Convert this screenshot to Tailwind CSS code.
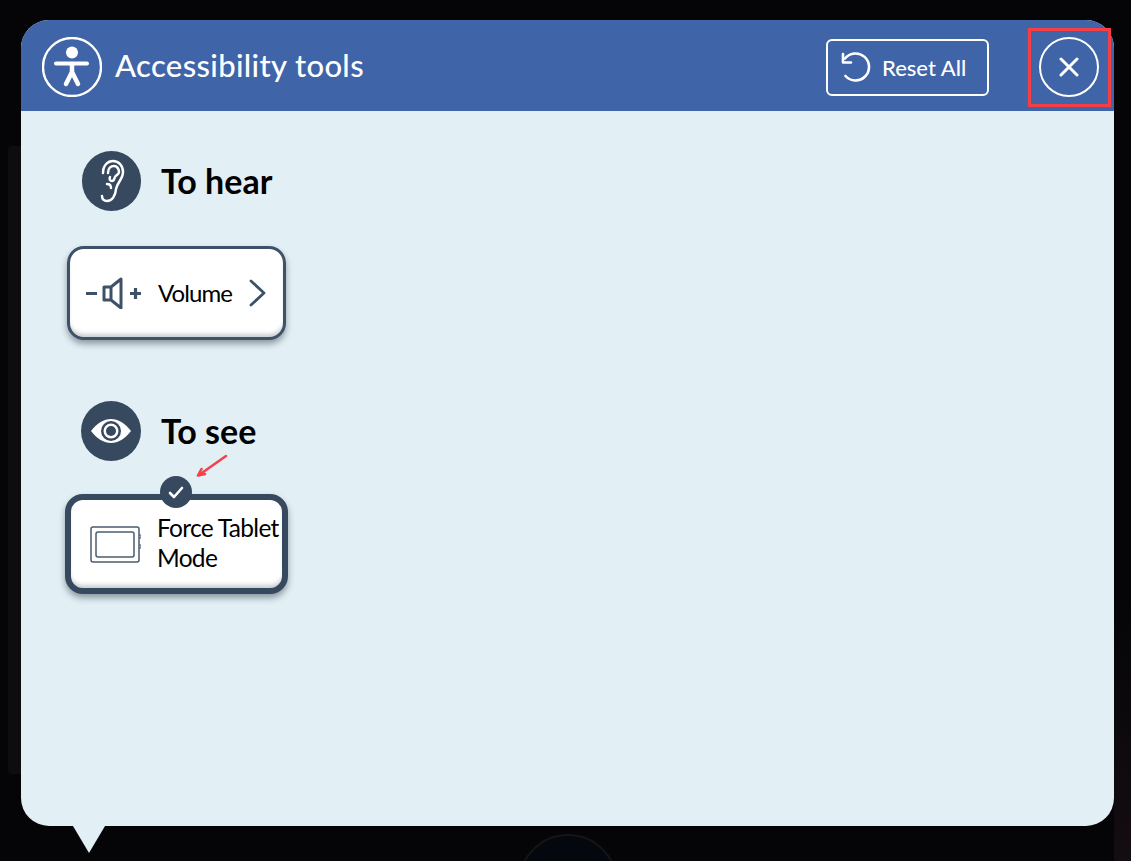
<!DOCTYPE html>
<html lang="en">
<head>
  <meta charset="UTF-8" />
  <title>Accessibility tools</title>
  <script src="https://cdn.jsdelivr.net/npm/@tailwindcss/browser@4"></script>
</head>
<body class="bg-[#050507] h-[861px] w-[1131px] overflow-hidden relative font-['Lato',sans-serif]">

  <!-- dim page behind the dialog -->
  <div class="absolute left-[8px] top-[146px] w-[1044px] h-[628px] bg-[#0d0d0f] rounded"></div>
  <div class="absolute left-[518px] top-[834px] w-[100px] h-[27px] overflow-hidden">
    <div class="w-[100px] h-[100px] rounded-full border-2 border-[#151518] bg-[#05070f]"></div>
  </div>
  <div class="absolute left-[1114px] top-[600px] w-[17px] h-[261px] bg-linear-to-b from-transparent to-[#140d11]"></div>

  <!-- dialog -->
  <div class="relative ml-[21px] pt-[20px] w-[1093px]">
    <div class="h-[806px] rounded-[28px] bg-[#e2eff5] flex flex-col overflow-hidden">

      <!-- header -->
      <div class="h-[91px] shrink-0 bg-[#4064a8] flex items-center pl-[21px] pr-[15px] pt-[3px] text-white">
        <svg width="60" height="60" viewBox="0 0 60 60" fill="none" stroke="white" class="shrink-0">
          <circle cx="30" cy="30" r="29" stroke-width="2.400"/>
          <circle cx="30" cy="15.500" r="6" fill="white" stroke="none"/>
          <path d="M14 26.500H45" stroke-width="4" stroke-linecap="round"/>
          <path d="M30 27V35L24 47M30 35L36 47" stroke-width="4.500" stroke-linecap="round" stroke-linejoin="round"/>
        </svg>
        <div class="ml-[13px] -mt-[4px] text-[31px] font-medium tracking-[0.35px] leading-none">Accessibility tools</div>
        <button class="ml-auto w-[163px] h-[57px] rounded-[6px] border-[2.500px] border-white flex items-center pl-[12px] text-[22px] font-medium">
          <svg width="31" height="31" viewBox="0 0 31 31" fill="none" stroke="white" stroke-width="2.600" stroke-linecap="round" stroke-linejoin="round" class="shrink-0">
            <path d="M5 6.500A13.500 13.500 0 1 1 5.500 24"/>
            <path d="M3 2V10.500H11"/>
          </svg>
          <span class="ml-[11px]">Reset All</span>
        </button>
        <button class="ml-[50px] w-[60px] h-[60px] rounded-full border-[2.500px] border-white flex items-center justify-center shrink-0">
          <svg width="20" height="20" viewBox="0 0 20 20" fill="none" stroke="white" stroke-width="3" stroke-linecap="round">
            <path d="M2 2L18 18M18 2L2 18"/>
          </svg>
        </button>
      </div>

      <!-- body -->
      <div class="flex flex-col items-start">
        <div class="ml-[61px] mt-[40px] flex items-center">
          <div class="w-[59px] h-[60px] rounded-full bg-[#37495f] flex items-center justify-center">
            <svg width="26" height="44" viewBox="0 0 26 44" fill="none" stroke="white" stroke-width="2.500" stroke-linecap="round" stroke-linejoin="round">
              <path d="M4 14C4 6 9 2 14 2C20 2 24 7 24 13C24 20 18 24 17 30C16.500 37 13 42 8 42C5 42 3 40 3 37"/>
              <path d="M9 14C9 9 12 7 15 7C18 7 20 10 20 13C20 15.500 17 16 16 18C15 20 15 22 13 22C11 22 10 20 11 18"/>
              <path d="M8 25C10 25 12 26 12 29"/>
            </svg>
          </div>
          <h2 class="ml-[20px] text-[34px] font-bold text-black leading-none tracking-[0px]">To hear</h2>
        </div>

        <button class="ml-[46px] mt-[35px] w-[219px] h-[94px] rounded-[17px] border-[3px] border-[#3d5268] bg-white shadow-[0_4px_6px_rgba(40,50,60,0.45),inset_0_-5px_4px_-2px_rgba(120,130,140,0.4)] flex items-center text-black">
          <svg width="56" height="32" viewBox="0 0 56 32" fill="none" stroke="#3d5268" class="ml-[16px] shrink-0">
            <path d="M0 16.500H11M44 16.500H55M49.500 11V22" stroke-width="3.200"/>
            <path d="M18 10H25V23H18ZM25 10L35 2V31L25 23" stroke-width="3" stroke-linejoin="round"/>
          </svg>
          <span class="ml-[16px] text-[24px] tracking-[-0.9px] leading-none">Volume</span>
          <svg width="18" height="28" viewBox="0 0 18 28" fill="none" stroke="#3d5268" stroke-width="2.800" stroke-linecap="round" stroke-linejoin="round" class="ml-[17px] shrink-0">
            <path d="M2 2L15 14L2 26"/>
          </svg>
        </button>

        <div class="ml-[60px] mt-[61px] flex items-center">
          <div class="w-[60px] h-[60px] rounded-full bg-[#37495f] flex items-center justify-center">
            <svg width="42" height="26" viewBox="0 0 42 26" fill="none">
              <path d="M1 13C7 5 14 1 21 1C28 1 35 5 41 13C35 21 28 25 21 25C14 25 7 21 1 13Z" fill="white"/>
              <circle cx="21" cy="13" r="10" fill="#37495f"/>
              <circle cx="21" cy="13" r="7.500" fill="white"/>
              <circle cx="21" cy="13" r="5" fill="#37495f"/>
            </svg>
          </div>
          <h2 class="ml-[20px] text-[34px] font-bold text-black leading-none tracking-[0px]">To see</h2>
        </div>

        <div class="relative ml-[44px] mt-[33px]">
          <div class="absolute left-[95px] -top-[18px] w-[32px] h-[32px] rounded-full bg-[#37495f] flex items-center justify-center z-10">
            <svg width="16" height="13" viewBox="0 0 16 13" fill="none" stroke="white" stroke-width="2.600" stroke-linecap="round" stroke-linejoin="round">
              <path d="M2 7L6 11L14 2"/>
            </svg>
          </div>
          <button class="w-[223px] h-[100px] rounded-[18px] border-[6px] border-[#37495f] bg-white shadow-[0_4px_6px_rgba(40,50,60,0.45),inset_0_-5px_4px_-2px_rgba(120,130,140,0.4)] flex items-center text-black text-left">
            <svg width="51" height="37" viewBox="0 0 51 37" fill="none" stroke="#4b5d70" stroke-width="1.500" class="ml-[19px] shrink-0">
              <rect x="1" y="1" width="48" height="35" rx="2"/>
              <rect x="6" y="6" width="38" height="25" rx="2"/>
              <path d="M49 9H51V12H49M49 19H51V22H49" stroke-width="1"/>
            </svg>
            <span class="ml-[16px] text-[24.500px] tracking-[-0.7px] leading-[30px] whitespace-nowrap -mt-[3px]">Force Tablet<br>Mode</span>
          </button>
        </div>
      </div>
    </div>

    <!-- tail under the bubble -->
    <div class="absolute left-[52px] top-[826px] w-0 h-0 border-l-[16px] border-r-[16px] border-t-[27px] border-l-transparent border-r-transparent border-t-[#e2eff5]"></div>
  </div>

  <!-- red annotations -->
  <div class="absolute left-[1028px] top-[28px] w-[83px] h-[79px] border-[3px] border-[#f63f45]"></div>
  <svg class="absolute left-[195px] top-[453px]" width="34" height="26" viewBox="0 0 34 26" fill="none" stroke="#f4424a" stroke-width="2.600" stroke-linecap="round">
    <path d="M31 3L4 22"/>
    <path d="M3 22.500L10 21M3 22.500L6.500 16" />
  </svg>
</body>
</html>
